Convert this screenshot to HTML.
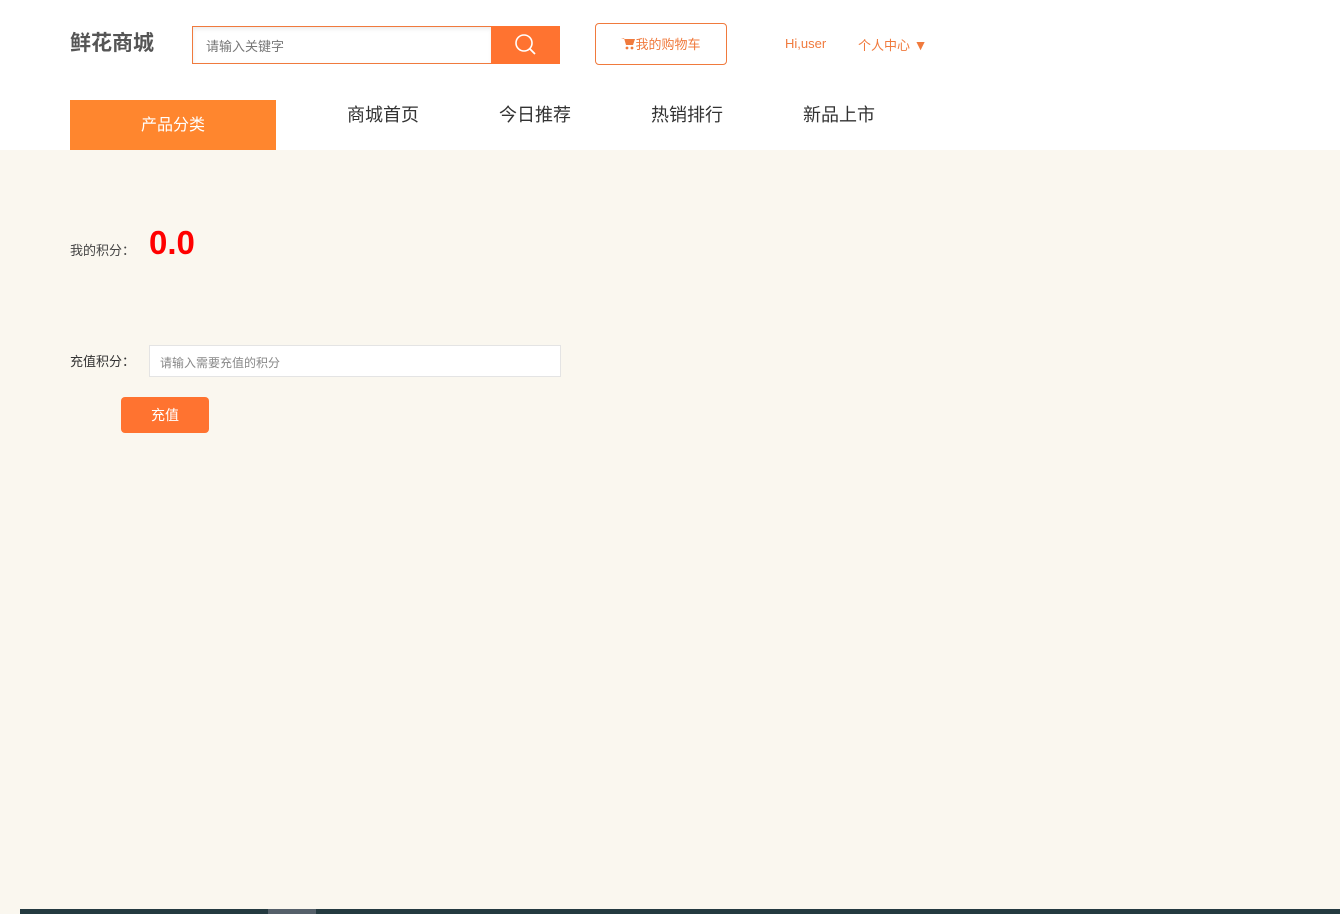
<!DOCTYPE html>
<html><head><meta charset="utf-8"><style>
*{margin:0;padding:0;box-sizing:border-box}
body{width:1340px;height:914px;overflow:hidden;background:#faf7ef;font-family:"Liberation Sans","Noto Sans CJK SC",sans-serif;position:relative}
.hdr{position:absolute;left:0;top:0;width:1340px;height:150px;background:#fff}
.abs{position:absolute}
.logo{left:70px;top:27px;font-size:21px;font-weight:bold;color:#555}
.search{left:192px;top:26px;width:300px;height:38px;border:1px solid #f07a3d;border-right:none;box-shadow:inset 0 2px 4px rgba(0,0,0,.08);font-size:13px;color:#777;padding:9px 0 0 13px}
.sbtn{left:491px;top:26px;width:69px;height:38px;background:#ff7330}
.cart{left:595px;top:23px;width:132px;height:42px;border:1px solid #f07a3d;border-radius:4px;color:#f07a3d;font-size:13px;display:flex;align-items:center;justify-content:center;padding-bottom:2px}
.hi{left:785px;top:36px;font-size:13px;color:#f07a3d}
.pc{left:858px;top:35px;font-size:13px;color:#f07a3d}
.cat{left:70px;top:100px;width:206px;height:50px;background:#ff862e;color:#fff;font-size:16px;text-align:center;line-height:52px}
.nav{top:101px;font-size:18px;color:#333}
.lbl{font-size:13px;color:#444}
.pts{left:149px;top:224px;font-size:33px;font-weight:bold;color:#f00}
.inp{left:149px;top:345px;width:412px;height:32px;background:#fff;border:1px solid #e4e4e4;font-size:12px;color:#888;padding:8px 0 0 10px}
.btn{left:121px;top:397px;width:88px;height:36px;background:#ff7330;border-radius:4px;color:#fff;font-size:14px;text-align:center;line-height:36px}
.bar{left:20px;top:909px;width:1320px;height:5px;background:#243a40}
.bar2{left:268px;top:909px;width:48px;height:5px;background:#55606a}
</style></head><body>
<div class="hdr"></div>
<div class="abs logo">鲜花商城</div>
<div class="abs search">请输入关键字</div>
<div class="abs sbtn"><svg width="69" height="38"><circle cx="33" cy="17" r="8" fill="none" stroke="#fff" stroke-width="1.6"/><line x1="39" y1="23" x2="44" y2="28" stroke="#fff" stroke-width="1.8"/></svg></div>
<div class="abs cart"><svg width="14" height="13" viewBox="0 0 14 13"><path d="M0 1h3l2 7h7l2-6H4" fill="#f07a3d"/><circle cx="6" cy="11" r="1.4" fill="#f07a3d"/><circle cx="11" cy="11" r="1.4" fill="#f07a3d"/></svg>我的购物车</div>
<div class="abs hi">Hi,user</div>
<div class="abs pc">个人中心 <span style="font-size:14px">▼</span></div>
<div class="abs cat">产品分类</div>
<div class="abs nav" style="left:347px">商城首页</div>
<div class="abs nav" style="left:499px">今日推荐</div>
<div class="abs nav" style="left:651px">热销排行</div>
<div class="abs nav" style="left:803px">新品上市</div>
<div class="abs lbl" style="left:70px;top:240px">我的积分： </div>
<div class="abs pts">0.0</div>
<div class="abs lbl" style="left:70px;top:351px;color:#333">充值积分： </div>
<div class="abs inp">请输入需要充值的积分</div>
<div class="abs btn">充值</div>
<div class="abs bar"></div><div class="abs bar2"></div>
</body></html>
